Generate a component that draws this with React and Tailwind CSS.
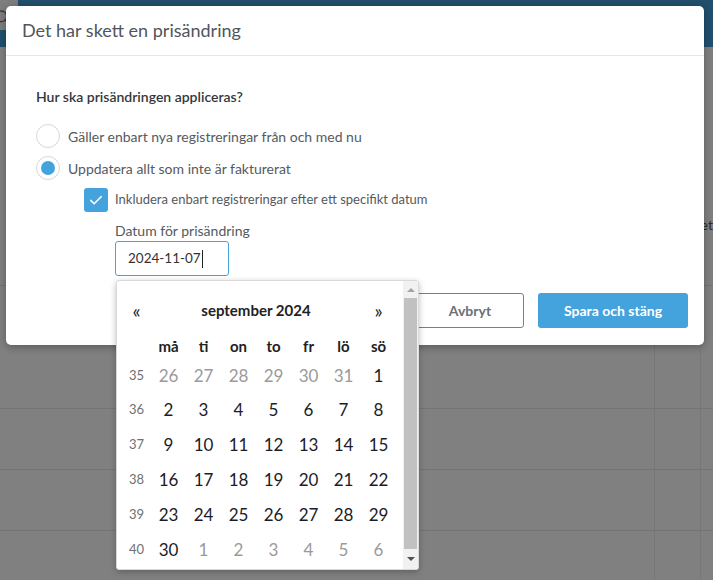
import { Search } from 'lucide-react';

const weeks = [
    { no: 35, days: [[26, 0], [27, 0], [28, 0], [29, 0], [30, 0], [31, 0], [1, 1]] },
    { no: 36, days: [[2, 1], [3, 1], [4, 1], [5, 1], [6, 1], [7, 1], [8, 1]] },
    { no: 37, days: [[9, 1], [10, 1], [11, 1], [12, 1], [13, 1], [14, 1], [15, 1]] },
    { no: 38, days: [[16, 1], [17, 1], [18, 1], [19, 1], [20, 1], [21, 1], [22, 1]] },
    { no: 39, days: [[23, 1], [24, 1], [25, 1], [26, 1], [27, 1], [28, 1], [29, 1]] },
    { no: 40, days: [[30, 1], [1, 0], [2, 0], [3, 0], [4, 0], [5, 0], [6, 0]] },
];

const weekdays = ['må', 'ti', 'on', 'to', 'fr', 'lö', 'sö'];

function Radio({ checked, label }) {
    return (
        <label className="flex h-6 items-center gap-2">
            <span className="grid h-6 w-6 place-items-center rounded-full border border-[#d5d8db] bg-white">
                {checked && <span className="h-[14px] w-[14px] rounded-full bg-[#44a3dc]" />}
            </span>
            <span className="text-[14px] text-[#555a60]">{label}</span>
        </label>
    );
}

function DatePopup() {
    return (
        <div className="absolute left-px top-[calc(100%+4px)] z-20 flex h-[290px] w-[303px] rounded-[3px] border border-[#d9d9d9] bg-white shadow-[0_2px_6px_rgba(0,0,0,0.25)]">
            <div className="flex-1 pl-[5px] pt-[11px]">
                <div className="grid h-9 grid-cols-[29px_repeat(7,35px)] items-center text-[#222]">
                    <span className="text-center text-[19px] leading-none">«</span>
                    <span className="col-span-6 text-center text-[15px] font-bold">september 2024</span>
                    <span className="text-center text-[19px] leading-none">»</span>
                </div>
                <div className="mt-[6px] grid h-6 grid-cols-[29px_repeat(7,35px)] items-center text-[15px] font-bold text-[#222]">
                    <span />
                    {weekdays.map((d) => (
                        <span key={d} className="text-center">{d}</span>
                    ))}
                </div>
                {weeks.map((w) => (
                    <div key={w.no} className="grid h-[34.8px] grid-cols-[29px_repeat(7,35px)] items-center">
                        <span className="text-center text-[13px] text-[#707070]">{w.no}</span>
                        {w.days.map(([d, cur], i) => (
                            <span
                                key={i}
                                className={`text-center text-[17px] ${cur ? 'text-[#1c1c28]' : 'text-[#9a9a9a]'}`}
                            >
                                {d}
                            </span>
                        ))}
                    </div>
                ))}
            </div>
            <div className="flex w-[15px] flex-col items-center bg-[#f1f1f1]">
                <div className="grid h-[17px] w-full place-items-center">
                    <span className="h-0 w-0 border-x-[4px] border-b-[4px] border-x-transparent border-b-[#a3a3a3]" />
                </div>
                <div className="w-[13px] flex-1 bg-[#c1c1c1]" />
                <div className="grid h-[20px] w-full place-items-center">
                    <span className="h-0 w-0 border-x-[4px] border-t-[4px] border-x-transparent border-t-[#505050]" />
                </div>
            </div>
        </div>
    );
}

export default function App() {
    return (
        <div className="relative h-[580px] w-[713px] overflow-hidden bg-[#808080] font-['Lato',sans-serif]">
            {/* dimmed page behind the dialog */}
            <div className="flex h-[47px] bg-[#214f6d]">
                <div className="relative h-[30px] w-[18px] bg-[#7e7e7e]">
                    <Search className="absolute -left-[6px] top-[9px] h-[16px] w-[16px] text-[#3a3a3a]" strokeWidth={2} />
                </div>
            </div>
            <div className="flex h-[239px] items-center justify-end border-b border-[#747474] pt-[116px] text-[14px] text-[#2a2a2a]">
                Budget
            </div>
            {[123, 61, 61, 61].map((h, i) => (
                <div key={i} className="flex border-b border-[#747474]" style={{ height: h }}>
                    <div className="w-[655px] border-r border-[#777777]" />
                    <div className="w-[46px] border-r border-[#777777]" />
                </div>
            ))}

            {/* dialog */}
            <div className="absolute left-[6px] top-[6px] z-10 w-[698px] rounded-[5px] bg-white shadow-[0_2px_8px_rgba(0,0,0,0.3)]">
                <div className="flex h-[50px] items-center border-b border-[#e6e6e6] px-4">
                    <h1 className="text-[18px] text-[#50565c]">Det har skett en prisändring</h1>
                </div>
                <div className="px-[30px] pt-[32px]">
                    <p className="text-[14px] font-semibold leading-[18px] text-[#33373b]">Hur ska prisändringen appliceras?</p>
                    <div className="mt-[18px] flex flex-col gap-2">
                        <Radio label="Gäller enbart nya registreringar från och med nu" />
                        <Radio checked label="Uppdatera allt som inte är fakturerat" />
                        <label className="ml-[48px] flex h-6 items-center gap-[7px]">
                            <span className="grid h-6 w-6 place-items-center rounded-[3px] bg-[#44a3dc]">
                                <svg viewBox="0 0 24 24" className="h-[18px] w-[18px]" fill="none">
                                    <path d="M5 12.5l4.5 4.5L19 7.5" stroke="white" strokeWidth="2" strokeLinecap="round" strokeLinejoin="round" />
                                </svg>
                            </span>
                            <span className="text-[13px] text-[#555a60]">Inkludera enbart registreringar efter ett specifikt datum</span>
                        </label>
                    </div>
                    <div className="ml-[79px] mt-[10px]">
                        <p className="text-[14px] leading-[18px] text-[#555a60]">Datum för prisändring</p>
                        <div className="relative mt-px w-[114px]">
                            <div className="flex h-[35px] items-center rounded-[3px] border border-[#44a3dc] px-3 text-[13.5px] text-[#333]">
                                2024-11-07
                                <span className="ml-px h-[18px] w-px bg-[#222]" />
                            </div>
                            <DatePopup />
                        </div>
                    </div>
                </div>
                <div className="flex justify-end gap-[14px] px-4 pb-[17px] pt-[17px]">
                    <button type="button" className="h-[35px] w-[108px] rounded-[3px] border border-[#7a7f85] text-[14px] font-bold text-[#6b7077]">
                        Avbryt
                    </button>
                    <button type="button" className="h-[35px] w-[150px] rounded-[3px] bg-[#44a3dc] text-[14px] font-bold text-white">
                        Spara och stäng
                    </button>
                </div>
            </div>
        </div>
    );
}
